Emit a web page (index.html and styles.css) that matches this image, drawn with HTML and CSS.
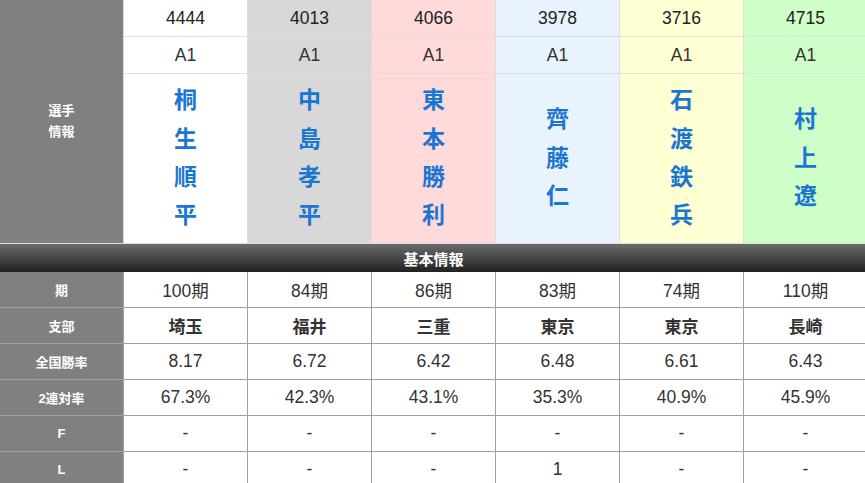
FILE: index.html
```html
<!DOCTYPE html>
<html lang="ja">
<head>
<meta charset="utf-8">
<link rel="stylesheet" href="styles.css">
</head>
<body>
<div class="board">
  <div class="top">
    <div class="label player">選手<br>情報</div>
    <div class="cell c1">4444</div>
    <div class="cell c2">4013</div>
    <div class="cell c3">4066</div>
    <div class="cell c4">3978</div>
    <div class="cell c5">3716</div>
    <div class="cell c6">4715</div>
    <div class="cell c1 cls">A1</div>
    <div class="cell c2 cls">A1</div>
    <div class="cell c3 cls">A1</div>
    <div class="cell c4 cls">A1</div>
    <div class="cell c5 cls">A1</div>
    <div class="cell c6 cls">A1</div>
    <div class="cell c1 name">桐<br>生<br>順<br>平</div>
    <div class="cell c2 name">中<br>島<br>孝<br>平</div>
    <div class="cell c3 name">東<br>本<br>勝<br>利</div>
    <div class="cell c4 name">齊<br>藤<br>仁</div>
    <div class="cell c5 name">石<br>渡<br>鉄<br>兵</div>
    <div class="cell c6 name">村<br>上<br>遼</div>
  </div>
  <div class="bar">基本情報</div>
  <div class="info">
    <div class="label">期</div>
    <div class="val">100期</div><div class="val">84期</div><div class="val">86期</div><div class="val">83期</div><div class="val">74期</div><div class="val">110期</div>
    <div class="label">支部</div>
    <div class="val strong">埼玉</div><div class="val strong">福井</div><div class="val strong">三重</div><div class="val strong">東京</div><div class="val strong">東京</div><div class="val strong">長崎</div>
    <div class="label">全国勝率</div>
    <div class="val">8.17</div><div class="val">6.72</div><div class="val">6.42</div><div class="val">6.48</div><div class="val">6.61</div><div class="val">6.43</div>
    <div class="label">2連対率</div>
    <div class="val">67.3%</div><div class="val">42.3%</div><div class="val">43.1%</div><div class="val">35.3%</div><div class="val">40.9%</div><div class="val">45.9%</div>
    <div class="label">F</div>
    <div class="val">-</div><div class="val">-</div><div class="val">-</div><div class="val">-</div><div class="val">-</div><div class="val">-</div>
    <div class="label">L</div>
    <div class="val">-</div><div class="val">-</div><div class="val">-</div><div class="val">1</div><div class="val">-</div><div class="val">-</div>
  </div>
</div>
</body>
</html>
```
FILE: styles.css
```css
html, body {
  margin: 0;
  padding: 0;
  background: #fff;
  overflow: hidden;
}
body {
  font-family: "Liberation Sans", Arial, "Noto Sans CJK JP", sans-serif;
  color: #222;
}
.board {
  width: 867px;
}
.top {
  display: grid;
  grid-template-columns: 123px repeat(6, 123px);
  grid-template-rows: 36px 36px 169px;
  gap: 1px;
  background: #dedede;
  border-bottom: 1px solid #dedede;
}
.label {
  background: #808080;
  color: #fff;
  font-weight: bold;
  font-size: 13px;
  display: flex;
  align-items: center;
  justify-content: center;
  text-align: center;
}
.player {
  grid-row: 1 / 4;
  line-height: 21px;
  padding-bottom: 2px;
}
.cell {
  display: flex;
  align-items: center;
  justify-content: center;
  font-size: 17.5px;
  color: #222;
}
.cls { color: #333; }
.c1 { background: #ffffff; }
.c2 { background: #d8d8d8; }
.c3 { background: #ffdada; }
.c4 { background: #e8f3ff; }
.c5 { background: #ffffd4; }
.c6 { background: #ceffc8; }
.name {
  color: #1a76d2;
  font-weight: bold;
  font-size: 23px;
  line-height: 38.4px;
  text-align: center;
  padding-bottom: 5px;
  font-family: "Noto Sans CJK JP", sans-serif;
}
.bar {
  height: 28px;
  background: linear-gradient(#6c6c6c, #202020);
  color: #fff;
  font-weight: bold;
  font-size: 15px;
  display: flex;
  align-items: center;
  justify-content: center;
}
.info {
  display: grid;
  grid-template-columns: 123px repeat(6, 123px);
  grid-auto-rows: 35px;
  gap: 1px;
  background: #a0a0a0;
}
.val {
  background: #fff;
  display: flex;
  align-items: center;
  justify-content: center;
  font-size: 17.5px;
  color: #333;
}
.strong {
  font-weight: bold;
  font-family: "Noto Sans CJK JP", sans-serif;
  font-size: 17px;
}
```
